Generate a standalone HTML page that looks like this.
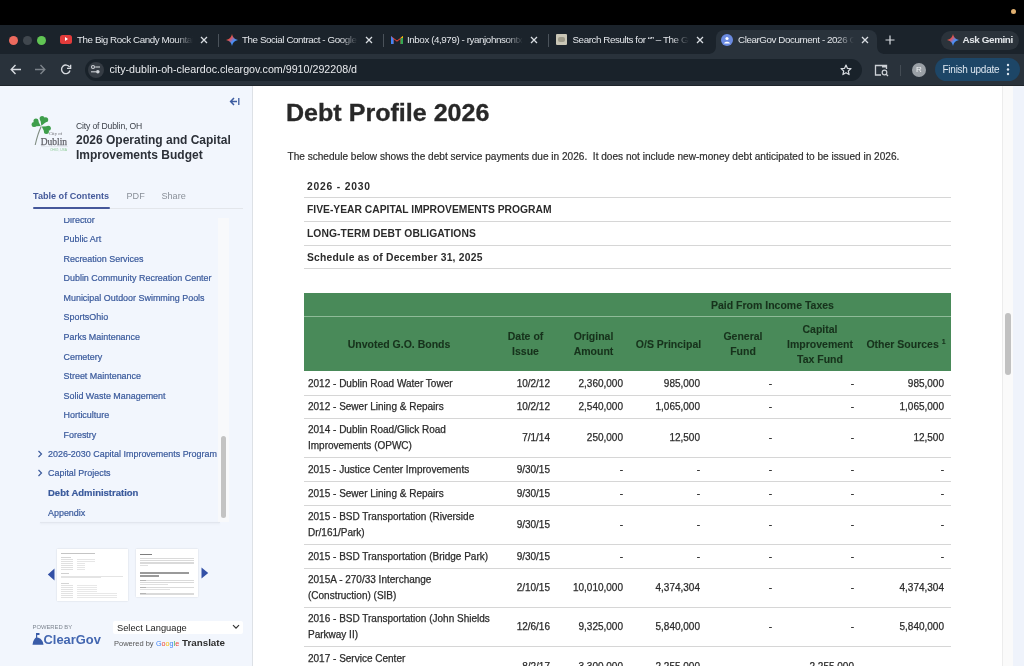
<!DOCTYPE html>
<html><head><meta charset="utf-8"><style>
*{box-sizing:border-box;margin:0;padding:0}
html,body{width:1024px;height:666px;overflow:hidden;background:#fff;font-family:"Liberation Sans",sans-serif}
.a{position:absolute}
.tl{position:absolute;top:35.5px;width:9px;height:9px;border-radius:50%}
.tab{position:absolute;top:25px;height:29px;color:#e3e6ea;font-size:9.8px;line-height:12px;white-space:nowrap;letter-spacing:-0.42px}
.tabtitle{position:absolute;top:8.8px;overflow:hidden;width:116px;-webkit-mask-image:linear-gradient(to right,#000 85%,transparent 100%)}
.x{position:absolute;top:8px;font-size:12px;color:#d8dce0}
.sep{position:absolute;top:34px;width:1px;height:13px;background:#4a525a}
.toc{position:absolute;font-size:8.95px;line-height:12px;color:#3a5a9c;white-space:nowrap;-webkit-text-stroke:0.2px #3a5a9c}
.t{position:absolute;white-space:nowrap}
.hl{position:absolute;height:1px;background:#d6d6d6}
.cell{position:absolute;font-size:10px;line-height:16px;color:#2b2b2b;white-space:nowrap;-webkit-text-stroke:0.25px #2b2b2b}
.hc{position:absolute;font-size:10.5px;line-height:15px;font-weight:bold;color:#17321c;text-align:center;-webkit-text-stroke:0.1px #17321c;white-space:nowrap}
</style></head><body><div style="position:absolute;left:0;top:0;width:1024px;height:666px;will-change:transform">

<div class="a" style="left:0;top:0;width:1024px;height:25px;background:#000"></div>
<div class="a" style="left:1010.5px;top:8.5px;width:5px;height:5px;border-radius:50%;background:#e0b070"></div>
<div class="a" style="left:0;top:25px;width:1024px;height:29px;background:#1b232b"></div>
<div class="tl" style="left:8.5px;background:#ec6a5e"></div>
<div class="tl" style="left:22.5px;background:#40474e"></div>
<div class="tl" style="left:36.5px;background:#61c554"></div>
<div class="a" style="left:715.5px;top:30px;width:161.5px;height:24px;background:#29323b;border-radius:8px 8px 0 0"></div>
<svg class="a" style="left:707.5px;top:46px" width="8" height="8" viewBox="0 0 8 8"><path d="M0 8 C4 8 8 6 8 0 V8Z" fill="#29323b"/></svg>
<svg class="a" style="left:877px;top:46px" width="8" height="8" viewBox="0 0 8 8"><path d="M8 8 C4 8 0 6 0 0 V8Z" fill="#29323b"/></svg>
<div class="a" style="left:0;top:53.5px;width:1024px;height:32.5px;background:#29323b"></div>
<div class="a" style="left:0;top:85px;width:1024px;height:1px;background:#1f252b"></div>

<div class="tab" style="left:60px;width:160px">
  <div class="a" style="left:0;top:10px;width:12px;height:9px;background:#e33b3b;border-radius:2.5px"></div>
  <div class="a" style="left:4.8px;top:12.2px;width:0;height:0;border-left:3.6px solid #fff;border-top:2.3px solid transparent;border-bottom:2.3px solid transparent"></div>
  <div class="tabtitle" style="left:17px">The Big Rock Candy Mountain</div>
  <svg class="x" style="left:140px;top:11px" width="8" height="8" viewBox="0 0 8 8"><path d="M1 1 L7 7 M7 1 L1 7" stroke="#d9dde2" stroke-width="1.3"/></svg>
</div>
<div class="sep" style="left:218px"></div>
<div class="tab" style="left:226px;width:160px">
  <svg class="a" style="left:0;top:8.5px" width="12" height="12" viewBox="0 0 12 12"><defs><linearGradient id="gg" x1="0" y1="0" x2="1" y2="1"><stop offset="0" stop-color="#f4b400"/><stop offset=".35" stop-color="#ea4f4f"/><stop offset=".6" stop-color="#4b8ef7"/><stop offset="1" stop-color="#34a0ff"/></linearGradient></defs><path d="M6 0 Q6.8 5.2 12 6 Q6.8 6.8 6 12 Q5.2 6.8 0 6 Q5.2 5.2 6 0Z" fill="url(#gg)"/></svg>
  <div class="tabtitle" style="left:16px">The Social Contract - Google Docs</div>
  <svg class="x" style="left:139px;top:11px" width="8" height="8" viewBox="0 0 8 8"><path d="M1 1 L7 7 M7 1 L1 7" stroke="#d9dde2" stroke-width="1.3"/></svg>
</div>
<div class="sep" style="left:383px"></div>
<div class="tab" style="left:391px;width:160px">
  <svg class="a" style="left:0;top:10px" width="12" height="9" viewBox="0 0 12 9"><path d="M0 1 L6 5.5 L12 1 V9 H9.5 V4 L6 6.8 L2.5 4 V9 H0Z" fill="#ea4335"/><path d="M0 1 V9 H2.5 V4Z" fill="#4285f4"/><path d="M12 1 V9 H9.5 V4Z" fill="#34a853"/><path d="M9.5 2.8 L12 1 V3Z" fill="#fbbc04"/></svg>
  <div class="tabtitle" style="left:16px">Inbox (4,979) - ryanjohnsontx@gmail.com</div>
  <svg class="x" style="left:139px;top:11px" width="8" height="8" viewBox="0 0 8 8"><path d="M1 1 L7 7 M7 1 L1 7" stroke="#d9dde2" stroke-width="1.3"/></svg>
</div>
<div class="sep" style="left:548px"></div>
<div class="tab" style="left:556px;width:160px">
  <div class="a" style="left:0;top:9px;width:11px;height:11px;background:#c9c6b6;border-radius:1px"></div>
  <div class="a" style="left:2px;top:12px;width:7px;height:5px;background:#9e9b8a;border-radius:2px"></div>
  <div class="tabtitle" style="left:16.5px">Search Results for &#8220;&#8221; &#8211; The Guardian</div>
  <svg class="x" style="left:140px;top:11px" width="8" height="8" viewBox="0 0 8 8"><path d="M1 1 L7 7 M7 1 L1 7" stroke="#d9dde2" stroke-width="1.3"/></svg>
</div>
<div class="tab" style="left:720.5px;width:160px">
  <div class="a" style="left:0;top:8.5px;width:12px;height:12px;background:#6a8ae0;border-radius:50%"></div>
  <svg class="a" style="left:2px;top:10.5px" width="8" height="8" viewBox="0 0 8 8"><circle cx="4" cy="2.5" r="1.6" fill="#fff"/><path d="M1 7.5 C1.5 5 6.5 5 7 7.5Z" fill="#fff"/></svg>
  <div class="tabtitle" style="left:17.5px">ClearGov Document - 2026 Operating</div>
  <svg class="x" style="left:140.5px;top:11px" width="8" height="8" viewBox="0 0 8 8"><path d="M1 1 L7 7 M7 1 L1 7" stroke="#d9dde2" stroke-width="1.3"/></svg>
</div>
<svg class="a" style="left:885px;top:35px" width="10" height="10" viewBox="0 0 10 10"><path d="M5 0.5 V9.5 M0.5 5 H9.5" stroke="#d9dde2" stroke-width="1.2"/></svg>
<div class="a" style="left:941px;top:30.5px;width:78px;height:19px;border-radius:9.5px;background:#2b333b"></div>
<svg class="a" style="left:947px;top:34px" width="12" height="12" viewBox="0 0 12 12"><defs><linearGradient id="g2" x1="0" y1="0" x2="1" y2="1"><stop offset="0" stop-color="#f4b400"/><stop offset=".35" stop-color="#ea4f4f"/><stop offset=".6" stop-color="#4b8ef7"/><stop offset="1" stop-color="#34a0ff"/></linearGradient></defs><path d="M6 0 Q6.8 5.2 12 6 Q6.8 6.8 6 12 Q5.2 6.8 0 6 Q5.2 5.2 6 0Z" fill="url(#g2)"/></svg>
<div class="a" style="left:962.5px;top:34px;color:#e3e6ea;font-size:9.9px;line-height:12px;font-weight:bold;letter-spacing:-0.4px">Ask Gemini</div>

<svg class="a" style="left:10px;top:64px" width="12" height="11" viewBox="0 0 12 11"><path d="M5.5 1 L1.2 5.5 L5.5 10 M1.5 5.5 H11" stroke="#d6dadf" stroke-width="1.4" fill="none"/></svg>
<svg class="a" style="left:34px;top:64px" width="12" height="11" viewBox="0 0 12 11"><path d="M6.5 1 L10.8 5.5 L6.5 10 M10.5 5.5 H1" stroke="#7c838a" stroke-width="1.4" fill="none"/></svg>
<svg class="a" style="left:60px;top:64px" width="12" height="11" viewBox="0 0 12 11"><path d="M9.6 3.2 A4.3 4.3 0 1 0 10 6.5" stroke="#d6dadf" stroke-width="1.4" fill="none"/><path d="M10.6 0.8 V4.4 H7" stroke="#d6dadf" stroke-width="1.4" fill="none"/></svg>

<div class="a" style="left:84.5px;top:58.5px;width:777.5px;height:22px;border-radius:11px;background:#19222a"></div>
<div class="a" style="left:87.5px;top:61.5px;width:16px;height:16px;border-radius:50%;background:#353c44"></div>
<svg class="a" style="left:90px;top:64px" width="11" height="11" viewBox="0 0 11 11"><circle cx="3" cy="3" r="1.5" stroke="#cdd1d6" stroke-width="1.1" fill="none"/><path d="M5.2 3 H10" stroke="#cdd1d6" stroke-width="1.1"/><circle cx="7.8" cy="7.8" r="1.8" fill="#cdd1d6"/><path d="M1 7.8 H6" stroke="#cdd1d6" stroke-width="1.1"/></svg>
<div class="a" style="left:109.5px;top:63px;color:#e8eaed;font-size:10.7px;line-height:13px;white-space:nowrap">city-dublin-oh-cleardoc.cleargov.com/9910/292208/d</div>
<svg class="a" style="left:840px;top:64px" width="12" height="12" viewBox="0 0 12 12"><path d="M6 1 L7.4 4.3 L11 4.6 L8.3 7 L9.1 10.6 L6 8.7 L2.9 10.6 L3.7 7 L1 4.6 L4.6 4.3Z" stroke="#d6dadf" stroke-width="1.2" fill="none" stroke-linejoin="round"/></svg>
<svg class="a" style="left:874px;top:64px" width="15" height="13" viewBox="0 0 15 13"><path d="M7 11 H1.5 V1.5 H12.5 V5" stroke="#cdd1d6" stroke-width="1.3" fill="none"/><rect x="8" y="1" width="5" height="2.5" fill="#cdd1d6"/><circle cx="10.5" cy="8.5" r="2.3" stroke="#cdd1d6" stroke-width="1.2" fill="none"/><path d="M12.2 10.2 L14 12" stroke="#cdd1d6" stroke-width="1.3"/></svg>
<div class="a" style="left:899.5px;top:65px;width:1px;height:11px;background:#444c54"></div>
<div class="a" style="left:912px;top:62.5px;width:14px;height:14px;border-radius:50%;background:#9aa0a6"></div>
<div class="a" style="left:912px;top:64.5px;width:14px;text-align:center;color:#eef0f2;font-size:8px;line-height:10px">R</div>
<div class="a" style="left:934.5px;top:58px;width:85px;height:23px;border-radius:11.5px;background:#1d4667"></div>
<div class="a" style="left:942.5px;top:64px;color:#dce6f0;font-size:10px;line-height:12px;letter-spacing:-0.25px;white-space:nowrap">Finish update</div>
<svg class="a" style="left:1006px;top:63px" width="4" height="13" viewBox="0 0 4 13"><circle cx="2" cy="2" r="1.2" fill="#dce6f0"/><circle cx="2" cy="6.5" r="1.2" fill="#dce6f0"/><circle cx="2" cy="11" r="1.2" fill="#dce6f0"/></svg>


<div class="a" style="left:0;top:86px;width:252px;height:580px;background:#f2f6fd"></div>
<div class="a" style="left:252px;top:86px;width:1px;height:580px;background:#dde1e6"></div>
<div class="a" style="left:1002px;top:86px;width:11px;height:580px;background:#fafafa;border-left:1px solid #ececec"></div>
<div class="a" style="left:1005px;top:313px;width:6px;height:62px;border-radius:3px;background:#c1c1c1"></div>
<div class="a" style="left:1013px;top:86px;width:11px;height:580px;background:#eff3fb"></div>

<div class="a" style="left:0;top:218px;width:252px;height:304px;overflow:hidden">
<div class="toc" style="left:63.5px;top:-3.9px">Director</div>
<div class="toc" style="left:63.5px;top:14.9px">Public Art</div>
<div class="toc" style="left:63.5px;top:34.7px">Recreation Services</div>
<div class="toc" style="left:63.5px;top:54.3px">Dublin Community Recreation Center</div>
<div class="toc" style="left:63.5px;top:74.1px">Municipal Outdoor Swimming Pools</div>
<div class="toc" style="left:63.5px;top:93.2px">SportsOhio</div>
<div class="toc" style="left:63.5px;top:112.7px">Parks Maintenance</div>
<div class="toc" style="left:63.5px;top:132.5px">Cemetery</div>
<div class="toc" style="left:63.5px;top:151.8px">Street Maintenance</div>
<div class="toc" style="left:63.5px;top:171.5px">Solid Waste Management</div>
<div class="toc" style="left:63.5px;top:190.9px">Horticulture</div>
<div class="toc" style="left:63.5px;top:210.5px">Forestry</div>
<div class="toc" style="left:48px;top:230.1px;">2026-2030 Capital Improvements Program</div>
<svg class="a" style="left:37px;top:231.6px" width="6" height="8" viewBox="0 0 6 8"><path d="M1.5 1 L4.5 4 L1.5 7" stroke="#3d5c9c" stroke-width="1.2" fill="none"/></svg>
<div class="toc" style="left:48px;top:249.3px;">Capital Projects</div>
<svg class="a" style="left:37px;top:250.8px" width="6" height="8" viewBox="0 0 6 8"><path d="M1.5 1 L4.5 4 L1.5 7" stroke="#3d5c9c" stroke-width="1.2" fill="none"/></svg>
<div class="toc" style="left:48px;top:268.9px;font-weight:bold;font-size:9.5px;">Debt Administration</div>
<div class="toc" style="left:48px;top:288.6px;">Appendix</div>
<div class="a" style="left:218px;top:0;width:11px;height:304px;background:#f8f9fb"></div>
<div class="a" style="left:220.5px;top:218px;width:5.5px;height:82px;border-radius:3px;background:#c3c3c3"></div>
</div>
<div class="a" style="left:40px;top:521.5px;width:180px;height:1.5px;background:#e2e6ee;box-shadow:0 1px 2px rgba(120,130,150,0.12)"></div>
<svg class="a" style="left:229px;top:97px" width="11" height="9" viewBox="0 0 11 9"><path d="M5 1 L1.6 4.5 L5 8 M1.8 4.5 H8" stroke="#3d5ca0" stroke-width="1.5" fill="none"/><path d="M9.8 1 V8" stroke="#3d5ca0" stroke-width="1.3"/></svg>
<svg class="a" style="left:28px;top:112px" width="44" height="44" viewBox="0 0 44 44">
<path d="M13.2 14.5 C11 19 9 25 7.2 33" stroke="#7f8c80" stroke-width="1.1" fill="none"/>
<g fill="#3f9e4c"><circle cx="7.94" cy="9.10" r="2.5"/><circle cx="6.09" cy="12.42" r="2.5"/><path d="M9.09 7.03 L12.68 13.91 L4.94 14.50Z"/><circle cx="17.70" cy="7.74" r="2.5"/><circle cx="14.14" cy="6.38" r="2.5"/><path d="M19.92 8.58 L13.41 13.64 L11.93 5.54Z"/><circle cx="18.41" cy="19.49" r="2.5"/><circle cx="20.34" cy="16.22" r="2.5"/><path d="M17.19 21.54 L13.72 14.51 L21.55 14.18Z"/></g>
<text x="21" y="23.2" font-family="Liberation Serif" font-size="4.8" fill="#68686e" textLength="13" lengthAdjust="spacingAndGlyphs">City of</text>
<text x="12.8" y="32.8" font-family="Liberation Serif" font-size="10.8" fill="#5f5f66" stroke="#5f5f66" stroke-width="0.25" textLength="26.2" lengthAdjust="spacingAndGlyphs">Dublin</text>
<path d="M13 34.5 H40" stroke="#d9dde3" stroke-width="0.5"/>
<text x="22" y="39" font-family="Liberation Sans" font-size="3" fill="#8fcc98" textLength="17" lengthAdjust="spacingAndGlyphs">OHIO, USA</text>
</svg>
<div class="t" style="left:76px;top:121px;font-size:8.6px;line-height:11px;color:#3a3f47;letter-spacing:-0.15px">City of Dublin, OH</div>
<div class="t" style="left:76px;top:133px;font-size:12px;line-height:15px;font-weight:bold;color:#2c3038">2026 Operating and Capital<br>Improvements Budget</div>
<div class="t" style="left:33px;top:191px;font-size:9.1px;line-height:11px;font-weight:bold;color:#44599a">Table of Contents</div>
<div class="t" style="left:126.5px;top:191px;font-size:9.1px;line-height:11px;color:#8a9099">PDF</div>
<div class="t" style="left:161.5px;top:191px;font-size:9.1px;line-height:11px;color:#8a9099">Share</div>
<div class="a" style="left:33px;top:208px;width:210px;height:1px;background:#e3e6eb"></div>
<div class="a" style="left:33px;top:207px;width:77px;height:2px;border-radius:1px;background:#45579a"></div>
<div class="a" style="left:56.5px;top:548.5px;width:71.5px;height:52px;background:#fff;box-shadow:0 0 1.5px rgba(0,0,0,0.15)"></div>
<div class="a" style="left:60.5px;top:552.5px;width:34px;height:0.8px;background:#c4c4c4"></div><div class="a" style="left:60.5px;top:556.5px;width:10px;height:0.8px;background:#d6d6d6"></div><div class="a" style="left:60.5px;top:558.5px;width:12px;height:0.8px;background:#e0e0e0"></div><div class="a" style="left:76.5px;top:558.5px;width:18px;height:0.8px;background:#e6e6e6"></div><div class="a" style="left:60.5px;top:560.5px;width:12px;height:0.8px;background:#e0e0e0"></div><div class="a" style="left:76.5px;top:560.5px;width:18px;height:0.8px;background:#e6e6e6"></div><div class="a" style="left:60.5px;top:562.5px;width:12px;height:0.8px;background:#e0e0e0"></div><div class="a" style="left:76.5px;top:562.5px;width:8px;height:0.8px;background:#e6e6e6"></div><div class="a" style="left:60.5px;top:564.5px;width:12px;height:0.8px;background:#e0e0e0"></div><div class="a" style="left:76.5px;top:564.5px;width:8px;height:0.8px;background:#e6e6e6"></div><div class="a" style="left:60.5px;top:566.5px;width:12px;height:0.8px;background:#e0e0e0"></div><div class="a" style="left:76.5px;top:566.5px;width:8px;height:0.8px;background:#e6e6e6"></div><div class="a" style="left:60.5px;top:568.5px;width:12px;height:0.8px;background:#e0e0e0"></div><div class="a" style="left:76.5px;top:568.5px;width:8px;height:0.8px;background:#e6e6e6"></div><div class="a" style="left:60.5px;top:573.0px;width:8px;height:0.8px;background:#d0d0d0"></div><div class="a" style="left:60.5px;top:575.5px;width:62px;height:0.8px;background:#e4e4e4"></div><div class="a" style="left:60.5px;top:577.3px;width:40px;height:0.8px;background:#e4e4e4"></div><div class="a" style="left:60.5px;top:583.0px;width:8px;height:0.8px;background:#d4d4d4"></div><div class="a" style="left:60.5px;top:585.0px;width:12px;height:0.8px;background:#e2e2e2"></div><div class="a" style="left:76.5px;top:585.0px;width:20px;height:0.8px;background:#e8e8e8"></div><div class="a" style="left:60.5px;top:587.0px;width:12px;height:0.8px;background:#e2e2e2"></div><div class="a" style="left:76.5px;top:587.0px;width:20px;height:0.8px;background:#e8e8e8"></div><div class="a" style="left:60.5px;top:589.0px;width:12px;height:0.8px;background:#e2e2e2"></div><div class="a" style="left:76.5px;top:589.0px;width:20px;height:0.8px;background:#e8e8e8"></div><div class="a" style="left:60.5px;top:591.0px;width:12px;height:0.8px;background:#e2e2e2"></div><div class="a" style="left:76.5px;top:591.0px;width:20px;height:0.8px;background:#e8e8e8"></div><div class="a" style="left:60.5px;top:593.0px;width:12px;height:0.8px;background:#e2e2e2"></div><div class="a" style="left:76.5px;top:593.0px;width:40px;height:0.8px;background:#e8e8e8"></div><div class="a" style="left:60.5px;top:595.0px;width:12px;height:0.8px;background:#e2e2e2"></div><div class="a" style="left:76.5px;top:595.0px;width:40px;height:0.8px;background:#e8e8e8"></div><div class="a" style="left:60.5px;top:597.0px;width:12px;height:0.8px;background:#e2e2e2"></div><div class="a" style="left:76.5px;top:597.0px;width:40px;height:0.8px;background:#e8e8e8"></div>
<div class="a" style="left:136px;top:548.5px;width:62px;height:48px;background:#fff;box-shadow:0 0 1.5px rgba(0,0,0,0.15)"></div>
<div class="a" style="left:139.5px;top:558.3px;width:54px;height:0.8px;background:#dadada"></div><div class="a" style="left:139.5px;top:560.0px;width:54px;height:0.8px;background:#dadada"></div><div class="a" style="left:139.5px;top:561.7px;width:54px;height:0.8px;background:#dadada"></div><div class="a" style="left:139.5px;top:563.4px;width:54px;height:0.8px;background:#dadada"></div><div class="a" style="left:139.5px;top:565.2px;width:8px;height:0.8px;background:#e0e0e0"></div><div class="a" style="left:139.5px;top:580.2px;width:54px;height:0.8px;background:#dadada"></div><div class="a" style="left:139.5px;top:582.0px;width:54px;height:0.8px;background:#dadada"></div><div class="a" style="left:139.5px;top:583.8px;width:28px;height:0.8px;background:#e0e0e0"></div><div class="a" style="left:139.5px;top:587.3px;width:54px;height:0.8px;background:#dadada"></div><div class="a" style="left:139.5px;top:589.1px;width:30px;height:0.8px;background:#e0e0e0"></div><div class="a" style="left:139.5px;top:592.5px;width:54px;height:0.8px;background:#dadada"></div><div class="a" style="left:139.5px;top:594.3px;width:54px;height:0.8px;background:#dadada"></div>
<div class="a" style="left:139.5px;top:553.5px;width:12px;height:1.4px;background:#7e7e7e"></div>
<div class="a" style="left:139.5px;top:572px;width:49px;height:1.5px;background:#9a9a9a"></div>
<div class="a" style="left:139.5px;top:575px;width:19px;height:1.5px;background:#9a9a9a"></div>
<div class="a" style="left:139.5px;top:580.2px;width:6px;height:0.9px;background:#b5b5b5"></div>
<div class="a" style="left:139.5px;top:587.3px;width:6px;height:0.9px;background:#b5b5b5"></div>
<div class="a" style="left:139.5px;top:592.5px;width:6px;height:0.9px;background:#b5b5b5"></div>
<svg class="a" style="left:47px;top:568px" width="8" height="13" viewBox="0 0 8 13"><path d="M7.5 0.5 L0.8 6.5 L7.5 12.5Z" fill="#3350a6"/></svg>
<svg class="a" style="left:201px;top:566.5px" width="8" height="12" viewBox="0 0 8 12"><path d="M0.5 0.5 L7.2 6 L0.5 11.5Z" fill="#3350a6"/></svg>
<div class="t" style="left:32.5px;top:622.5px;font-size:5.85px;line-height:8px;color:#7d8590">POWERED BY</div>
<svg class="a" style="left:32px;top:632px" width="12" height="14" viewBox="0 0 12 14"><path d="M4 1 H7.5 V3 H5.2 V5.6 C8.5 6 11 8.5 11.5 12.8 H0.5 C1 8.5 3 6 4 5.6Z" fill="#3a5ca8"/></svg>
<div class="t" style="left:43.5px;top:631.5px;font-size:12.9px;line-height:15px;font-weight:bold;color:#4266b0">ClearGov</div>
<div class="a" style="left:113px;top:621px;width:130px;height:12.5px;background:#fff;border-radius:2px"></div>
<div class="t" style="left:117px;top:621.5px;font-size:9.3px;line-height:12px;color:#222">Select Language</div>
<svg class="a" style="left:232px;top:624px" width="8" height="6" viewBox="0 0 8 6"><path d="M1 1.2 L4 4.2 L7 1.2" stroke="#333" stroke-width="1.2" fill="none"/></svg>
<div class="t" style="left:114px;top:638.5px;font-size:7.5px;line-height:10px;color:#555">Powered by</div>
<div class="t" style="left:156px;top:638.5px;font-size:7.2px;line-height:10px;"><span style="color:#4285f4">G</span><span style="color:#ea4335">o</span><span style="color:#fbbc05">o</span><span style="color:#4285f4">g</span><span style="color:#34a853">l</span><span style="color:#ea4335">e</span></div>
<div class="t" style="left:182px;top:636.5px;font-size:9.8px;line-height:11px;font-weight:bold;color:#2f2f2f">Translate</div>
<div class="t" style="left:286px;top:99px;font-size:23px;line-height:28px;font-weight:bold;color:#282828;transform:scaleX(1.09);transform-origin:0 0;-webkit-text-stroke:0.3px #282828">Debt Profile 2026</div>
<div class="t" style="left:287.5px;top:150.5px;font-size:10.08px;line-height:12px;color:#2e2e2e;-webkit-text-stroke:0.2px #2e2e2e">The schedule below shows the debt service payments due in 2026.&nbsp; It does not include new-money debt anticipated to be issued in 2026.</div>
<div class="t" style="left:307px;top:179.5px;font-size:10.3px;line-height:14px;font-weight:bold;color:#2b2b2b;letter-spacing:0.8px">2026 - 2030</div>
<div class="t" style="left:307px;top:203.0px;font-size:10.3px;line-height:14px;font-weight:bold;color:#2b2b2b;letter-spacing:0px">FIVE-YEAR CAPITAL IMPROVEMENTS PROGRAM</div>
<div class="t" style="left:307px;top:226.5px;font-size:10.3px;line-height:14px;font-weight:bold;color:#2b2b2b;letter-spacing:0.08px">LONG-TERM DEBT OBLIGATIONS</div>
<div class="t" style="left:307px;top:250.5px;font-size:10.3px;line-height:14px;font-weight:bold;color:#2b2b2b;letter-spacing:0.23px">Schedule as of December 31, 2025</div>
<div class="hl" style="left:304px;top:197px;width:647px"></div>
<div class="hl" style="left:304px;top:221px;width:647px"></div>
<div class="hl" style="left:304px;top:245px;width:647px"></div>
<div class="hl" style="left:304px;top:268px;width:647px"></div>
<div class="a" style="left:304px;top:293px;width:647px;height:78px;background:#498a59"></div>
<div class="a" style="left:304px;top:316px;width:647px;height:1px;background:#8fbb98"></div>
<div class="hc" style="left:711px;top:297.5px;width:123px">Paid From Income Taxes</div>
<div class="hc" style="left:304px;top:336.5px;width:190px">Unvoted G.O. Bonds</div>
<div class="hc" style="left:494px;top:329.0px;width:63px">Date of<br>Issue</div>
<div class="hc" style="left:557px;top:329.0px;width:73px">Original<br>Amount</div>
<div class="hc" style="left:630px;top:336.5px;width:77px">O/S Principal</div>
<div class="hc" style="left:707px;top:329.0px;width:72px">General<br>Fund</div>
<div class="hc" style="left:779px;top:321.5px;width:82px">Capital<br>Improvement<br>Tax Fund</div>
<div class="hc" style="left:861px;top:336.5px;width:90px">Other Sources <span style='font-size:7px;position:relative;top:-4px'>1</span></div>
<div class="cell" style="left:308px;top:375.8px">2012 - Dublin Road Water Tower</div>
<div class="cell" style="left:494px;top:375.8px;width:56px;text-align:right">10/2/12</div>
<div class="cell" style="left:557px;top:375.8px;width:66px;text-align:right">2,360,000</div>
<div class="cell" style="left:630px;top:375.8px;width:70px;text-align:right">985,000</div>
<div class="cell" style="left:707px;top:375.8px;width:65px;text-align:right">-</div>
<div class="cell" style="left:779px;top:375.8px;width:75px;text-align:right">-</div>
<div class="cell" style="left:861px;top:375.8px;width:83px;text-align:right">985,000</div>
<div class="hl" style="left:304px;top:395px;width:647px"></div>
<div class="cell" style="left:308px;top:399.3px">2012 - Sewer Lining &amp; Repairs</div>
<div class="cell" style="left:494px;top:399.3px;width:56px;text-align:right">10/2/12</div>
<div class="cell" style="left:557px;top:399.3px;width:66px;text-align:right">2,540,000</div>
<div class="cell" style="left:630px;top:399.3px;width:70px;text-align:right">1,065,000</div>
<div class="cell" style="left:707px;top:399.3px;width:65px;text-align:right">-</div>
<div class="cell" style="left:779px;top:399.3px;width:75px;text-align:right">-</div>
<div class="cell" style="left:861px;top:399.3px;width:83px;text-align:right">1,065,000</div>
<div class="hl" style="left:304px;top:418px;width:647px"></div>
<div class="cell" style="left:308px;top:422.3px">2014 - Dublin Road/Glick Road<br>Improvements (OPWC)</div>
<div class="cell" style="left:494px;top:430.3px;width:56px;text-align:right">7/1/14</div>
<div class="cell" style="left:557px;top:430.3px;width:66px;text-align:right">250,000</div>
<div class="cell" style="left:630px;top:430.3px;width:70px;text-align:right">12,500</div>
<div class="cell" style="left:707px;top:430.3px;width:65px;text-align:right">-</div>
<div class="cell" style="left:779px;top:430.3px;width:75px;text-align:right">-</div>
<div class="cell" style="left:861px;top:430.3px;width:83px;text-align:right">12,500</div>
<div class="hl" style="left:304px;top:457px;width:647px"></div>
<div class="cell" style="left:308px;top:461.8px">2015 - Justice Center Improvements</div>
<div class="cell" style="left:494px;top:461.8px;width:56px;text-align:right">9/30/15</div>
<div class="cell" style="left:557px;top:461.8px;width:66px;text-align:right">-</div>
<div class="cell" style="left:630px;top:461.8px;width:70px;text-align:right">-</div>
<div class="cell" style="left:707px;top:461.8px;width:65px;text-align:right">-</div>
<div class="cell" style="left:779px;top:461.8px;width:75px;text-align:right">-</div>
<div class="cell" style="left:861px;top:461.8px;width:83px;text-align:right">-</div>
<div class="hl" style="left:304px;top:481px;width:647px"></div>
<div class="cell" style="left:308px;top:485.8px">2015 - Sewer Lining &amp; Repairs</div>
<div class="cell" style="left:494px;top:485.8px;width:56px;text-align:right">9/30/15</div>
<div class="cell" style="left:557px;top:485.8px;width:66px;text-align:right">-</div>
<div class="cell" style="left:630px;top:485.8px;width:70px;text-align:right">-</div>
<div class="cell" style="left:707px;top:485.8px;width:65px;text-align:right">-</div>
<div class="cell" style="left:779px;top:485.8px;width:75px;text-align:right">-</div>
<div class="cell" style="left:861px;top:485.8px;width:83px;text-align:right">-</div>
<div class="hl" style="left:304px;top:505px;width:647px"></div>
<div class="cell" style="left:308px;top:509.3px">2015 - BSD Transportation (Riverside<br>Dr/161/Park)</div>
<div class="cell" style="left:494px;top:517.3px;width:56px;text-align:right">9/30/15</div>
<div class="cell" style="left:557px;top:517.3px;width:66px;text-align:right">-</div>
<div class="cell" style="left:630px;top:517.3px;width:70px;text-align:right">-</div>
<div class="cell" style="left:707px;top:517.3px;width:65px;text-align:right">-</div>
<div class="cell" style="left:779px;top:517.3px;width:75px;text-align:right">-</div>
<div class="cell" style="left:861px;top:517.3px;width:83px;text-align:right">-</div>
<div class="hl" style="left:304px;top:544px;width:647px"></div>
<div class="cell" style="left:308px;top:548.8px">2015 - BSD Transportation (Bridge Park)</div>
<div class="cell" style="left:494px;top:548.8px;width:56px;text-align:right">9/30/15</div>
<div class="cell" style="left:557px;top:548.8px;width:66px;text-align:right">-</div>
<div class="cell" style="left:630px;top:548.8px;width:70px;text-align:right">-</div>
<div class="cell" style="left:707px;top:548.8px;width:65px;text-align:right">-</div>
<div class="cell" style="left:779px;top:548.8px;width:75px;text-align:right">-</div>
<div class="cell" style="left:861px;top:548.8px;width:83px;text-align:right">-</div>
<div class="hl" style="left:304px;top:568px;width:647px"></div>
<div class="cell" style="left:308px;top:572.3px">2015A - 270/33 Interchange<br>(Construction) (SIB)</div>
<div class="cell" style="left:494px;top:580.3px;width:56px;text-align:right">2/10/15</div>
<div class="cell" style="left:557px;top:580.3px;width:66px;text-align:right">10,010,000</div>
<div class="cell" style="left:630px;top:580.3px;width:70px;text-align:right">4,374,304</div>
<div class="cell" style="left:707px;top:580.3px;width:65px;text-align:right">-</div>
<div class="cell" style="left:779px;top:580.3px;width:75px;text-align:right">-</div>
<div class="cell" style="left:861px;top:580.3px;width:83px;text-align:right">4,374,304</div>
<div class="hl" style="left:304px;top:607px;width:647px"></div>
<div class="cell" style="left:308px;top:611.3px">2016 - BSD Transportation (John Shields<br>Parkway II)</div>
<div class="cell" style="left:494px;top:619.3px;width:56px;text-align:right">12/6/16</div>
<div class="cell" style="left:557px;top:619.3px;width:66px;text-align:right">9,325,000</div>
<div class="cell" style="left:630px;top:619.3px;width:70px;text-align:right">5,840,000</div>
<div class="cell" style="left:707px;top:619.3px;width:65px;text-align:right">-</div>
<div class="cell" style="left:779px;top:619.3px;width:75px;text-align:right">-</div>
<div class="cell" style="left:861px;top:619.3px;width:83px;text-align:right">5,840,000</div>
<div class="hl" style="left:304px;top:646px;width:647px"></div>
<div class="cell" style="left:308px;top:650.8px">2017 - Service Center<br>Improvements</div>
<div class="cell" style="left:494px;top:658.8px;width:56px;text-align:right">8/2/17</div>
<div class="cell" style="left:557px;top:658.8px;width:66px;text-align:right">3,300,000</div>
<div class="cell" style="left:630px;top:658.8px;width:70px;text-align:right">2,255,000</div>
<div class="cell" style="left:707px;top:658.8px;width:65px;text-align:right">-</div>
<div class="cell" style="left:779px;top:658.8px;width:75px;text-align:right">2,255,000</div>
<div class="cell" style="left:861px;top:658.8px;width:83px;text-align:right">-</div>
</div></body></html>
